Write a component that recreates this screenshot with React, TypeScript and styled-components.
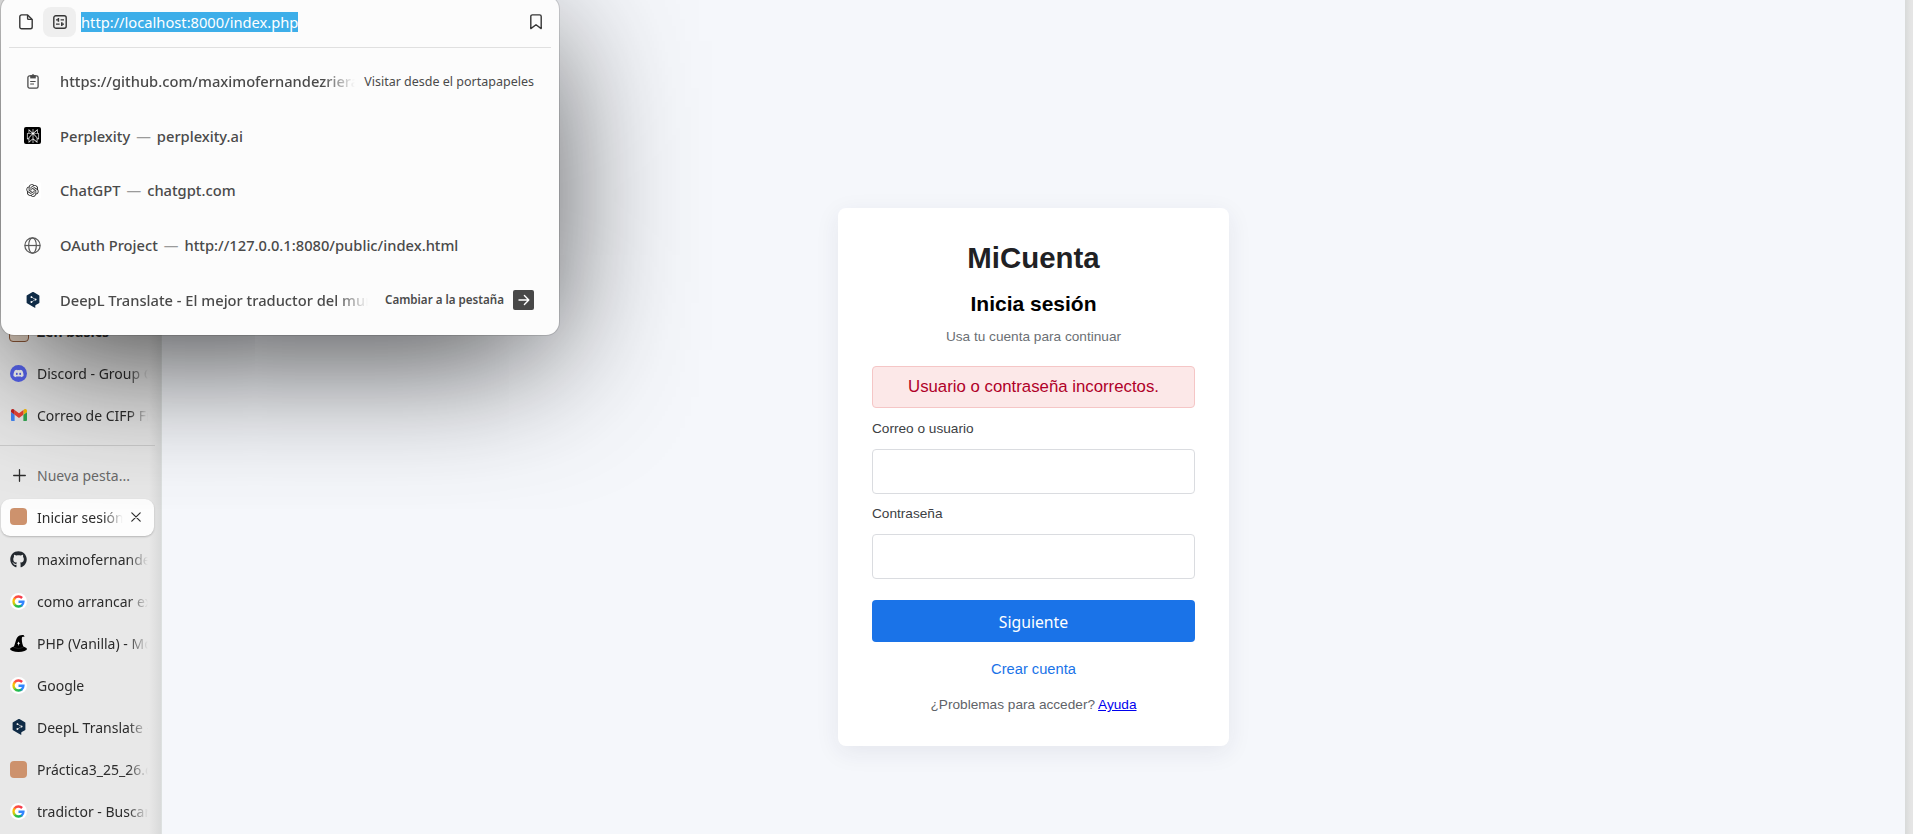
import React from "react";
import styled, { createGlobalStyle, css } from "styled-components";
import { SiDeepl, SiPerplexity } from "react-icons/si";
import { RiOpenaiFill } from "react-icons/ri";
import { FaDiscord, FaGithub } from "react-icons/fa";

const uiFont = `"Noto Sans", "Liberation Sans", sans-serif`;
const pageFont = `"Liberation Sans", Arial, sans-serif`;

const GlobalStyle = createGlobalStyle`
  * { box-sizing: border-box; }
  html, body { margin: 0; padding: 0; overflow: hidden; }
`;

const Window = styled.div`
  position: relative;
  display: flex;
  width: 1913px;
  height: 834px;
  overflow: hidden;
  background: #e8e8e8;
  font-family: ${uiFont};
`;

/* ---------- Tab sidebar ---------- */

const Sidebar = styled.aside`
  flex: 0 0 161px;
  display: flex;
  flex-direction: column;
  padding: 311px 6px 0 1px;
  background: linear-gradient(to right, #e8e8e8 149px, #e2e2e2 154px, #d9dada 161px);
`;

const Tab = styled.div<{ $active?: boolean }>`
  flex: 0 0 42px;
  display: flex;
  align-items: center;
  padding: 2px 0;
  ${(p) =>
    p.$active &&
    css`
      flex-basis: 37px;
      margin: 2px 1px 3px 0;
      border-radius: 9px;
      background: #fdfdfd;
      box-shadow: 0 1px 2px rgba(0, 0, 0, 0.22);
    `}
`;

const TabIcon = styled.span<{ $shift?: number }>`
  flex: 0 0 17px;
  height: 17px;
  margin: 0 ${(p) => 10 - (p.$shift ?? 0)}px 2px ${(p) => 9 + (p.$shift ?? 0)}px;
  display: flex;
  align-items: center;
  justify-content: center;
`;

const FolderIcon = styled.span`
  flex: none;
  width: 20px;
  height: 20px;
  margin: 0 8px 0 8px;
  border: 1.5px solid #8a5536;
  border-radius: 4px;
  background: #dfcfc0;
`;

const TabLabel = styled.span<{ $width?: number; $bold?: boolean; $muted?: boolean; $fade?: boolean }>`
  width: ${(p) => p.$width ?? 111}px;
  font-size: 14px;
  line-height: 20px;
  white-space: nowrap;
  overflow: hidden;
  font-weight: ${(p) => (p.$bold ? 700 : 400)};
  color: ${(p) => (p.$muted ? "#6a6a6a" : "#2c2c2c")};
  ${(p) =>
    p.$fade !== false &&
    css`
      mask-image: linear-gradient(to left, transparent 0, #000 20px);
    `}
`;

const Divider = styled.hr`
  flex: 0 0 1px;
  width: 155px;
  margin: 8px 0 9px -1px;
  border: 0;
  background: #cbcbcb;
`;

const Swatch = styled.span`
  width: 17px;
  height: 17px;
  border-radius: 4px;
  background: #cd926d;
`;

const DiscordBadge = styled.span`
  width: 17px;
  height: 17px;
  border-radius: 50%;
  background: #5865f2;
  color: #fff;
  display: flex;
  align-items: center;
  justify-content: center;
`;

const CloseButton = styled.span`
  display: flex;
  margin: 0 0 1px 8px;
`;

/* ---------- Web page ---------- */

const Content = styled.main`
  flex: 1 1 0;
  display: flex;
  align-items: flex-start;
  justify-content: center;
  padding-top: 208px;
  background: #f5f7fb;
  border-left: 1px solid #dde1e0;
  font-family: ${pageFont};
`;

const RightEdge = styled.div`
  flex: 0 0 8px;
  background: linear-gradient(to right, #d8dad9, #e5e5e5 6px);
`;

const Card = styled.section`
  width: 391px;
  height: 538px;
  padding: 33px 34px 0;
  display: flex;
  flex-direction: column;
  background: #fff;
  border-radius: 8px;
  box-shadow: 0 6px 25px rgba(32, 33, 80, 0.08);
  text-align: center;
`;

const Brand = styled.h1`
  margin: 0 0 17px;
  font-size: 29.4px;
  line-height: 34px;
  color: #202124;
`;

const Heading = styled.h2`
  margin: 0 0 13px;
  font-size: 21px;
  line-height: 24px;
  color: #000;
`;

const Subtitle = styled.p`
  margin: 0 0 21px;
  font-size: 13.65px;
  line-height: 16px;
  color: #6b6f74;
`;

const ErrorBox = styled.div`
  height: 42px;
  margin-bottom: 13px;
  border: 1px solid #f5c6c6;
  border-radius: 4px;
  background: #fce8e8;
  color: #b00028;
  font-size: 16.8px;
  line-height: 40px;
`;

const FieldLabel = styled.label`
  font-size: 13.65px;
  line-height: 16px;
  text-align: left;
  color: #3c4043;
`;

const Field = styled.input`
  width: 100%;
  height: 45px;
  margin: 12px 0;
  border: 1px solid #dadce0;
  border-radius: 4px;
  background: #fff;
  outline: none;
`;

const Submit = styled.button`
  height: 42px;
  margin: 9px 0 19px;
  border: 0;
  border-radius: 4px;
  background: #1a73e8;
  color: #fff;
  font: 400 15.75px/42px ${uiFont};
`;

const CreateLink = styled.a`
  font-size: 14.7px;
  line-height: 17px;
  color: #1a73e8;
  margin-bottom: 18px;
`;

const Help = styled.p`
  margin: 0;
  font-size: 13.65px;
  line-height: 17px;
  color: #5f6368;

  a {
    color: #0000ee;
    text-decoration: underline;
  }
`;

/* ---------- Floating address bar ---------- */

const UrlPopup = styled.div`
  position: absolute;
  left: 1px;
  top: -4px;
  width: 558px;
  height: 339px;
  padding: 4px 8px 0;
  border-radius: 13px;
  background: #fcfcfc;
  box-shadow: 0 0 0 1px rgba(0, 0, 0, 0.12), 0 30px 140px -15px rgba(0, 0, 0, 0.8);
`;

const UrlRow = styled.div`
  display: flex;
  align-items: center;
  height: 48px;
  padding: 0 9px 4px 10px;
  border-bottom: 1px solid #e0e0e0;
  color: #363636;
`;

const SiteButton = styled.span`
  display: flex;
  align-items: center;
  justify-content: center;
  width: 33px;
  height: 30px;
  margin: 0 5px 0 10px;
  border-radius: 8px;
  background: #efefef;
`;

const UrlText = styled.span`
  height: 20px;
  margin-right: auto;
  font-size: 14.7px;
  line-height: 20px;
  color: #fff;
  background: #3daee9;
`;

const Results = styled.div`
  display: flex;
  flex-direction: column;
  padding-top: 6px;
`;

const Result = styled.div`
  display: flex;
  align-items: center;
  height: 54.6px;
  padding: 0 17px 0 15px;
  color: #4a4a4a;
  font-size: 14.7px;
  font-weight: 500;
  white-space: nowrap;
`;

const ResultIcon = styled.span`
  display: flex;
  align-items: center;
  justify-content: center;
  flex: 0 0 17px;
  height: 17px;
  margin-right: 19px;
`;

const ResultText = styled.span<{ $width?: number }>`
  ${(p) =>
    p.$width &&
    css`
      width: ${p.$width}px;
      overflow: hidden;
      mask-image: linear-gradient(to left, transparent 0, #000 32px);
    `}
`;

const Dash = styled.span`
  margin: 0 6px;
  color: #9a9a9a;
`;

const ActionText = styled.span<{ $strong?: boolean }>`
  margin-left: auto;
  font-size: ${(p) => (p.$strong ? 11.6 : 12.5)}px;
  font-weight: ${(p) => (p.$strong ? 600 : 400)};
`;

const GoBox = styled.span`
  display: flex;
  align-items: center;
  justify-content: center;
  width: 21px;
  height: 20px;
  margin-left: 9px;
  border-radius: 2px;
  background: #484848;
`;

const BlackTile = styled.span`
  display: flex;
  align-items: center;
  justify-content: center;
  width: 17px;
  height: 17px;
  border-radius: 2px;
  background: #000;
  color: #fff;
`;

const WhiteTile = styled(BlackTile)`
  background: #fff;
  color: #222;
`;

/* ---------- Drawings ---------- */

const GoogleIcon = () => (
  <svg width="17" height="17" viewBox="0 0 17 17" fill="none">
    <defs>
      <linearGradient id="gRed" x1="4" y1="0" x2="13" y2="0" gradientUnits="userSpaceOnUse">
        <stop offset="0" stopColor="#ff5a3c" />
        <stop offset="1" stopColor="#f4344f" />
      </linearGradient>
      <linearGradient id="gLeft" x1="0" y1="4" x2="0" y2="13" gradientUnits="userSpaceOnUse">
        <stop offset="0" stopColor="#ff7a2a" />
        <stop offset="0.4" stopColor="#fcc800" />
        <stop offset="1" stopColor="#9ccc20" />
      </linearGradient>
      <linearGradient id="gBottom" x1="4" y1="0" x2="13" y2="0" gradientUnits="userSpaceOnUse">
        <stop offset="0" stopColor="#4fc534" />
        <stop offset="0.6" stopColor="#10b65c" />
        <stop offset="1" stopColor="#2c8ed0" />
      </linearGradient>
    </defs>
    <circle cx="8.5" cy="8.5" r="8.5" fill="#fff" />
    <path d="M4.9 5.1A5.1 5.1 0 0 0 4.9 11.9" stroke="url(#gLeft)" strokeWidth="2.5" />
    <path d="M4.7 11.7A5.1 5.1 0 0 0 12.2 12.1" stroke="url(#gBottom)" strokeWidth="2.5" />
    <path d="M4.7 5.3A5.1 5.1 0 0 1 12.1 5" stroke="url(#gRed)" strokeWidth="2.5" />
    <path d="M8.5 8.7H13.4A5.1 5.1 0 0 1 11.7 12.4" stroke="#3186ff" strokeWidth="2.4" />
  </svg>
);

const GmailIcon = () => (
  <svg width="16" height="12" viewBox="52 42 88 66">
    <path fill="#4285f4" d="M58 108h14V74L52 59v43c0 3.32 2.69 6 6 6" />
    <path fill="#34a853" d="M120 108h14c3.32 0 6-2.69 6-6V59l-20 15" />
    <path fill="#fbbc04" d="M120 48v26l20-15v-8c0-7.42-8.47-11.65-14.4-7.2" />
    <path fill="#ea4335" d="M72 74V48l24 18 24-18v26L96 92" />
    <path fill="#c5221f" d="M52 51v8l20 15V48l-5.6-4.2c-5.94-4.45-14.4-.22-14.4 7.2" />
  </svg>
);

const HatIcon = () => (
  <svg width="17" height="17" viewBox="0 0 17 17">
    <ellipse cx="8.5" cy="14" rx="8.5" ry="2.9" fill="#000" />
    <path d="M3.2 12.6C5 10.5 5.6 4.6 7.4 2.2 8.8.4 11.4-.2 13.8.2L14.6 1.8C13.6 1.6 12.6 1.6 12 2.2 11.4 5 12.2 9.6 13.8 12.6Z" fill="#000" />
    <path d="M8.6 6.4l.5 1.4 1.2.4-1.2.5-.2 2.2-.9-2.1-1-.4.9-.6Z" fill="#fff" />
    <path d="M3.6 12.4Q8.5 14.8 13.4 12.4" fill="none" stroke="#555" strokeWidth=".4" />
  </svg>
);

const PlusIcon = () => (
  <svg width="13" height="13" viewBox="0 0 13 13" stroke="#2c2c2c" strokeWidth="1.3" strokeLinecap="round">
    <path d="M6.5 .7v11.6M.7 6.5h11.6" />
  </svg>
);

const CloseIcon = () => (
  <svg width="10" height="10" viewBox="0 0 10 10" stroke="#2c2c2c" strokeWidth="1.2" strokeLinecap="round">
    <path d="M.8 .8l8.4 8.4M9.2 .8L.8 9.2" />
  </svg>
);

const PageIcon = () => (
  <svg width="14" height="16" viewBox="0 0 14 16" fill="none" stroke="#363636" strokeWidth="1.4" strokeLinejoin="round">
    <path d="M2.6 .9H8.6L13.2 5.5V13a1.8 1.8 0 0 1-1.8 1.8H2.6A1.8 1.8 0 0 1 .8 13V2.7A1.8 1.8 0 0 1 2.6 .9Z" />
    <path d="M8.6 1V4.4a1 1 0 0 0 1 1h3.4" />
  </svg>
);

const SettingsIcon = () => (
  <svg width="14" height="14" viewBox="0 0 14 14" fill="none" stroke="#363636" strokeWidth="1.4">
    <rect x=".8" y=".8" width="12.4" height="12.4" rx="2" />
    <path d="M3 4.9h3M7.6 4.9H11M3 9.1h3.6M8.2 9.1H11" strokeWidth="1.3" />
    <path d="M5.4 3.1v3.6M8.8 7.3v3.6" strokeWidth="1.5" />
  </svg>
);

const BookmarkIcon = () => (
  <svg width="12" height="16" viewBox="0 0 12 16" fill="none" stroke="#363636" strokeWidth="1.4" strokeLinejoin="round">
    <path d="M2.4 .9H9.6A1.6 1.6 0 0 1 11.2 2.5V14.6L6 10.8 .8 14.6V2.5A1.6 1.6 0 0 1 2.4 .9Z" />
  </svg>
);

const ClipboardIcon = () => (
  <svg width="12" height="15" viewBox="0 0 12 15" fill="none" stroke="#4a4a4a" strokeWidth="1.3">
    <rect x=".9" y="1.9" width="10.2" height="12.2" rx="1.6" />
    <path d="M3.2 1.2h5.6v3.2H3.2z" fill="#4a4a4a" stroke="none" />
    <circle cx="6" cy="1.5" r="1.3" fill="#4a4a4a" stroke="none" />
    <path d="M3.2 7.5h5.4M3.2 10h3.8" strokeWidth="1.1" />
  </svg>
);

const GlobeIcon = () => (
  <svg width="17" height="17" viewBox="0 0 16 16" fill="none" stroke="#5a5a5a" strokeWidth="1.15">
    <circle cx="8" cy="8" r="7.2" />
    <ellipse cx="8" cy="8" rx="3.6" ry="7.2" />
    <path d="M.8 8h14.4" />
  </svg>
);

const ArrowIcon = () => (
  <svg width="12" height="12" viewBox="0 0 12 12" fill="none" stroke="#fff" strokeWidth="1.4" strokeLinecap="round" strokeLinejoin="round">
    <path d="M1 6h9.6M6.4 1.6L10.8 6l-4.4 4.4" />
  </svg>
);

type TabItem = { label: string; icon: React.ReactNode };

const pinned: TabItem[] = [
  { label: "Discord - Group Chat", icon: <DiscordBadge><FaDiscord size={11} /></DiscordBadge> },
  { label: "Correo de CIFP Francesc", icon: <GmailIcon /> },
];

const openTabs: TabItem[] = [
  { label: "maximofernandezriera", icon: <FaGithub size={17} color="#24292f" /> },
  { label: "como arrancar executable", icon: <GoogleIcon /> },
  { label: "PHP (Vanilla) - Modelo", icon: <HatIcon /> },
  { label: "Google", icon: <GoogleIcon /> },
  { label: "DeepL Translate - El mejor", icon: <SiDeepl size={16} color="#0f2b46" /> },
  { label: "Práctica3_25_26.odt", icon: <Swatch /> },
  { label: "tradictor - Buscar", icon: <GoogleIcon /> },
];

const TabRow = ({ label, icon }: TabItem) => (
  <Tab>
    <TabIcon>{icon}</TabIcon>
    <TabLabel>{label}</TabLabel>
  </Tab>
);

export default function App() {
  return (
    <Window>
      <GlobalStyle />
      <Sidebar>
        <Tab>
          <FolderIcon />
          <TabLabel $bold $fade={false}>Zen basics</TabLabel>
        </Tab>
        {pinned.map((t) => <TabRow key={t.label} {...t} />)}
        <Divider />
        <Tab>
          <TabIcon $shift={1}><PlusIcon /></TabIcon>
          <TabLabel $muted $fade={false}>Nueva pesta...</TabLabel>
        </Tab>
        <Tab $active>
          <TabIcon><Swatch /></TabIcon>
          <TabLabel $width={86}>Iniciar sesión - MiCuenta</TabLabel>
          <CloseButton><CloseIcon /></CloseButton>
        </Tab>
        {openTabs.map((t) => <TabRow key={t.label} {...t} />)}
      </Sidebar>

      <Content>
        <Card>
          <Brand>MiCuenta</Brand>
          <Heading>Inicia sesión</Heading>
          <Subtitle>Usa tu cuenta para continuar</Subtitle>
          <ErrorBox>Usuario o contraseña incorrectos.</ErrorBox>
          <FieldLabel htmlFor="user">Correo o usuario</FieldLabel>
          <Field id="user" />
          <FieldLabel htmlFor="pass">Contraseña</FieldLabel>
          <Field id="pass" type="password" />
          <Submit>Siguiente</Submit>
          <CreateLink>Crear cuenta</CreateLink>
          <Help>¿Problemas para acceder? <a href="#ayuda">Ayuda</a></Help>
        </Card>
      </Content>
      <RightEdge />

      <UrlPopup>
        <UrlRow>
          <PageIcon />
          <SiteButton><SettingsIcon /></SiteButton>
          <UrlText>http://localhost:8000/index.php</UrlText>
          <BookmarkIcon />
        </UrlRow>
        <Results>
          <Result>
            <ResultIcon><ClipboardIcon /></ResultIcon>
            <ResultText $width={295}>https://github.com/maximofernandezriera</ResultText>
            <ActionText>Visitar desde el portapapeles</ActionText>
          </Result>
          <Result>
            <ResultIcon><BlackTile><SiPerplexity size={14} /></BlackTile></ResultIcon>
            <ResultText>Perplexity<Dash>—</Dash>perplexity.ai</ResultText>
          </Result>
          <Result>
            <ResultIcon><WhiteTile><RiOpenaiFill size={15} /></WhiteTile></ResultIcon>
            <ResultText>ChatGPT<Dash>—</Dash>chatgpt.com</ResultText>
          </Result>
          <Result>
            <ResultIcon><GlobeIcon /></ResultIcon>
            <ResultText>OAuth Project<Dash>—</Dash>http://127.0.0.1:8080/public/index.html</ResultText>
          </Result>
          <Result>
            <ResultIcon><SiDeepl size={16} color="#0f2b46" /></ResultIcon>
            <ResultText $width={308}>DeepL Translate - El mejor traductor del mundo</ResultText>
            <ActionText $strong>Cambiar a la pestaña</ActionText>
            <GoBox><ArrowIcon /></GoBox>
          </Result>
        </Results>
      </UrlPopup>
    </Window>
  );
}
